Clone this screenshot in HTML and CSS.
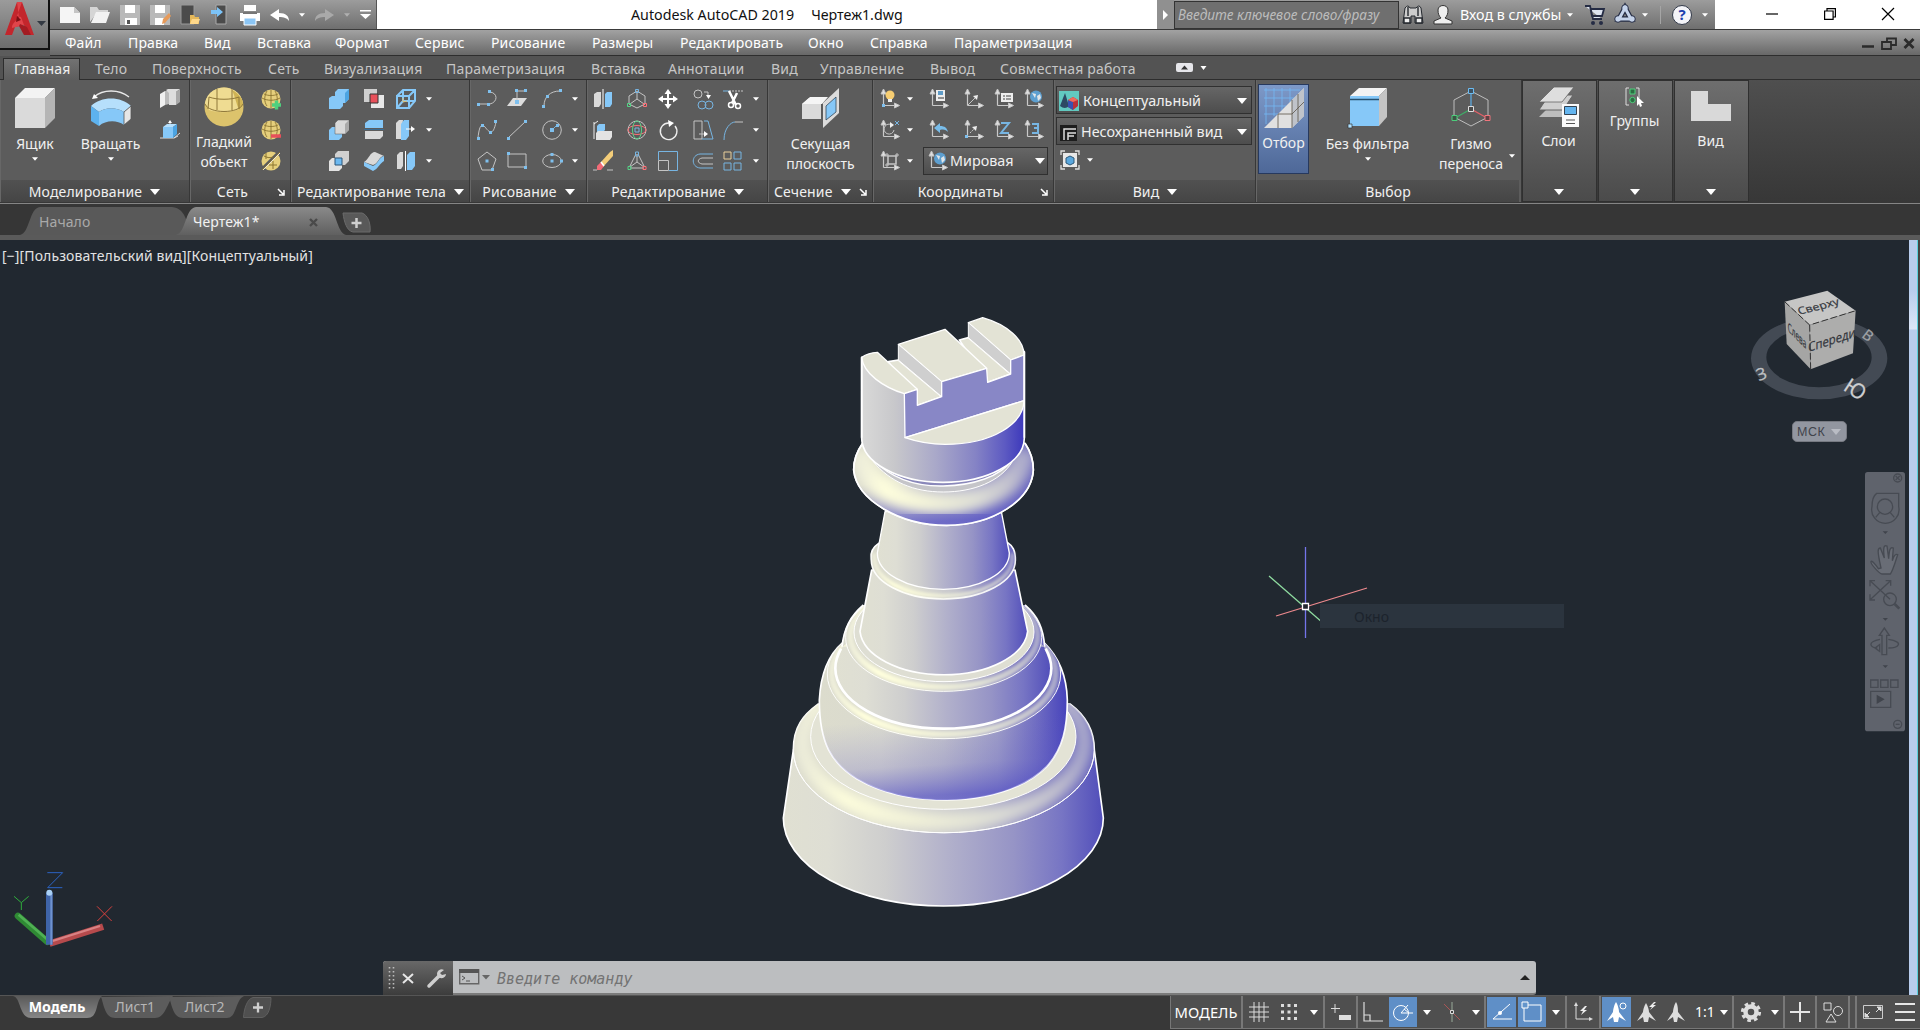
FILE: index.html
```html
<!DOCTYPE html>
<html lang="ru">
<head>
<meta charset="utf-8">
<title>Autodesk AutoCAD 2019 Чертеж1.dwg</title>
<link rel="stylesheet" href="styles.css">
</head>
<body>
<svg class="defs" width="0" height="0">
  <defs>
    <symbol id="caret" viewBox="0 0 10 6"><path d="M0 0h10L5 6z" fill="currentColor"/></symbol>
    <symbol id="axes" viewBox="0 0 20 20"><path d="M3.500 16.500V4M3.500 16.500H16" fill="none" stroke="#c9c9c9" stroke-width="1.200"/><path d="M1 5 3.500 0 6 5zM14.500 14l5 2.500-5 2.500z" fill="#e0e0e0"/></symbol>
    <symbol id="launch" viewBox="0 0 8 8"><path d="M1 1l5 5M7 2v5H2" fill="none" stroke="#fff" stroke-width="1.500"/></symbol>
    <symbol id="globe" viewBox="0 0 20 20"><circle cx="10" cy="10" r="9.500" fill="#e6cf7c"/><path d="M1 9c5 3 13 3 18 0M10 1v18M3 5c4 2 10 2 14 0M6 2C3 7 3 13 6 17M14 2c3 5 3 11 0 15" fill="none" stroke="#8a7431" stroke-width=".9"/></symbol>
  </defs>
</svg>

<header class="header">
  <button class="app">
    <svg width="49" height="49" viewBox="0 0 49 49"><path d="M17 2h5l12 33h-6l-4-10-9 2-3 8H5z" fill="#c3262c"/><path d="M17 2h5l-5 14 4 1 3 8-12 3c-1-3 4-8 7-10z" fill="#e0444a"/><path d="M17 16l4 4-5 2z" fill="#7b0f14"/><path d="M20 24l7 3 4 8h-7l-5-9z" fill="#a21c22"/><path d="M37 21h9l-4.500 5z" fill="#333942"/></svg>
  </button>
  <div class="title">
    <div class="qat">
      <svg class="i" viewBox="0 0 20 20"><path d="M0 2h14l6 6v10H0z" fill="#f5f5f5"/><path d="M14 2v6h6z" fill="#c5c5c5"/></svg>
      <svg class="i" viewBox="0 0 20 20"><path d="M0 17V2h7l2 3h9v4H6z" fill="#d5d5d5"/><path d="M1 18 6 7h14l-4 11z" fill="#f2f2f2"/></svg>
      <svg class="i" viewBox="0 0 20 20"><path d="M0 0h20v20H0z" fill="#b9b9b9"/><path d="M5 0h10v8H5zM5 13h12v7H5z" fill="#fff"/><path d="M7 15h3v4H7z" fill="#555"/></svg>
      <svg class="i" viewBox="0 0 20 20"><path d="M0 0h20v20H0z" fill="#b9b9b9"/><path d="M5 0h10v8H5zM5 13h9v7H5z" fill="#fff"/><path d="M12 19l1-5 6-6 2 3-6 7z" fill="#e69a5a"/></svg>
      <svg class="i" viewBox="0 0 20 20"><path d="M1 0h13v19H1z" fill="#4b4b4b" stroke="#999"/><path d="M10 19v-9h4l1 2h4v7z" fill="#e5b85a"/><path d="M10 19l2-5h8l-2 5z" fill="#ffd88a"/></svg>
      <svg class="i" viewBox="0 0 20 20"><path d="M6 0h10v19H6z" fill="#4b4b4b" stroke="#aaa"/><path d="M1 5h6V2l6 5-6 5V9H1z" fill="#7cc3f7"/></svg>
      <svg class="i" viewBox="0 0 20 20"><path d="M4 0h12v6H4zM0 8h20v8H0z" fill="#fff"/><path d="M3 7h14v2H3z" fill="#777"/><path d="M4 13h12v7H4z" fill="#8cc6f5" stroke="#fff"/></svg>
      <svg class="i" viewBox="0 0 20 20"><path d="M0 10 9 4v4c7 0 10 3 10 8-2-3-5-4-10-4v4z" fill="#fff"/></svg>
      <svg class="c sm"><use href="#caret"/></svg>
      <svg class="i" viewBox="0 0 20 20"><path d="M20 10 11 4v4C4 8 1 11 1 16c2-3 5-4 10-4v4z" fill="#a9a9a9"/></svg>
      <svg class="c sm dim"><use href="#caret"/></svg>
      <svg class="i" viewBox="0 0 20 20"><path d="M5 5h11v1.500H5zM5 9h11l-5.500 5z" fill="#fff"/></svg>
    </div>
    <div class="caption"><span>Autodesk AutoCAD 2019</span><span>Чертеж1.dwg</span></div>
    <div class="info">
      <div class="info-arrow"></div>
      <div class="search">Введите ключевое слово/фразу</div>
      <svg class="i" viewBox="0 0 20 20"><path d="M2 3q3-4 5 0h6q3-4 5 0l2 15h-8v-7H8v7H0z" fill="#ccc" stroke="#24282e"/><path d="M1 13h6v5H1zM13 13h6v5h-6zM5 2v9M15 2v9" fill="#eee" stroke="#24282e" stroke-width="1.400"/></svg>
      <svg class="i" viewBox="0 0 20 20"><path d="M5 5c0-6 10-6 10 0 0 4-1 6-3 8l7 3v3H1v-3l7-3C6 11 5 9 5 5z" fill="#eee" stroke="#333"/></svg>
      <span class="login">Вход в службы</span><svg class="c sm"><use href="#caret"/></svg>
      <svg class="i cart" viewBox="0 0 20 20"><path d="M0 1h5l3 13h9M5.500 4H19l-2 7H7z" fill="#dce3ef" stroke="#252c44" stroke-width="1.800"/><circle cx="8" cy="18" r="2" fill="#252c44"/><circle cx="16" cy="18" r="2" fill="#252c44"/></svg>
      <svg class="i tri" viewBox="0 0 20 20"><path d="M10 3 4 14h12z" fill="none" stroke="#252c44" stroke-width="5.500"/><g fill="#c5d3ea" stroke="#252c44"><circle cx="10" cy="3" r="3.300"/><circle cx="3" cy="14" r="3.300"/><circle cx="17" cy="14" r="3.300"/></g><path d="M10 3 4 14h12z" fill="none" stroke="#c5d3ea" stroke-width="3"/></svg>
      <svg class="c sm"><use href="#caret"/></svg>
      <i class="bar"></i>
      <span class="help">?</span>
      <svg class="c sm"><use href="#caret"/></svg>
    </div>
    <div class="win">
      <svg width="12" height="12" viewBox="0 0 12 12"><path d="M0 6h12" stroke="#000" stroke-width="1.200"/></svg>
      <svg width="12" height="12" viewBox="0 0 12 12" fill="none" stroke="#000" stroke-width="1.200"><path d="M.6 3h8.500v8.400H.6zM3 3V.6h8.400V9H9"/></svg>
      <svg width="12" height="12" viewBox="0 0 12 12"><path d="M0 0l12 12M12 0 0 12" stroke="#000" stroke-width="1.200"/></svg>
    </div>
  </div>
  <nav class="menu">
    <span>Файл</span><span>Правка</span><span>Вид</span><span>Вставка</span><span>Формат</span><span>Сервис</span><span>Рисование</span><span>Размеры</span><span>Редактировать</span><span>Окно</span><span>Справка</span><span>Параметризация</span>
    <svg class="mdi" width="54" height="14" viewBox="0 0 54 14"><path d="M0 9.500h12" stroke="#2b2b2b" stroke-width="2.500"/><path d="M20 5h9v7h-9zM25 5V1.500h9V8h-5" fill="none" stroke="#2b2b2b" stroke-width="1.800"/><path d="M42.500 2l9 9M51.500 2l-9 9" stroke="#2b2b2b" stroke-width="2.800"/></svg>
  </nav>
</header>

<nav class="tabs">
  <span class="on">Главная</span><span>Тело</span><span>Поверхность</span><span>Сеть</span><span>Визуализация</span><span>Параметризация</span><span>Вставка</span><span>Аннотации</span><span>Вид</span><span>Управление</span><span>Вывод</span><span>Совместная работа</span>
  <svg class="mini" width="32" height="10" viewBox="0 0 32 10"><rect width="17" height="9" rx="2" fill="#e6e6ea"/><path d="M5 6.500h7L8.500 2.500z" fill="#333"/><path d="M24.500 3h6l-3 4z" fill="#fff"/></svg>
</nav>

<section class="ribbon">
  <div class="panel p-model">
    <div class="body">
      <div class="big b1">
        <svg width="40" height="40" viewBox="0 0 40 40"><path d="M0 10h30v30H0z" fill="#dadada"/><path d="M0 10 10 0h30L30 10z" fill="#f3f3f3"/><path d="M30 10 40 0v30L30 40z" fill="#b5b5b5"/></svg>
        <b>Ящик</b><svg class="c sm"><use href="#caret"/></svg>
      </div>
      <div class="big b2">
        <svg width="40" height="40" viewBox="0 0 40 40"><path d="M3 9C12 1 28 1 38 9" fill="none" stroke="#e8e8e8" stroke-width="1.300"/><path d="M1 11l2-5 4 4z" fill="#fff"/><path d="M0 18c10-10 30-10 40 0l-7 6c-8-5-18-5-25 0z" fill="#b6dffb"/><path d="M0 18l8 6v14l-8-5z" fill="#5db2ee"/><path d="M8 24c7-5 17-5 25 0v13c-7-5-18-5-25 1z" fill="#86c8f8"/><path d="M33 24l7-6v13l-7 6z" fill="#e6e6e6" stroke="#555" stroke-width=".8"/></svg>
        <b>Вращать</b><svg class="c sm"><use href="#caret"/></svg>
      </div>
      <div class="col">
        <svg class="i" viewBox="0 0 20 20"><path d="M0 5 5 2v14l-5 3z" fill="#f0f0f0"/><path d="M5 2h4v13l-4 1z" fill="#bbb"/><path d="M6 1 8 0h12l-4 3v13H9V4z" fill="#ddd"/><path d="M16 3l4-3v13l-4 3z" fill="#a8a8a8"/></svg>
        <svg class="i" viewBox="0 0 20 20"><path d="M10 6V2M0 18h14l6-5M14 18l4-2" stroke="#ddd" fill="none"/><path d="M8 3l2-3 2 3z" fill="#fff"/><path d="M3 7h10v11H3z" fill="#86c8f8"/><path d="M3 7l4-3h10l-4 3z" fill="#b6dffb"/><path d="M13 7l4-3v10l-4 4z" fill="#4ca4e2"/></svg>
      </div>
    </div>
    <footer>Моделирование<svg class="c"><use href="#caret"/></svg></footer>
  </div>

  <div class="panel p-mesh">
    <div class="body">
      <div class="big">
        <svg width="40" height="40" viewBox="0 0 40 40"><circle cx="20" cy="20" r="19.500" fill="#dcc36c"/><path d="M1 16C3 4 14 .5 20 .5S37 4 39 16l-4 6c-8 4-22 4-30 1z" fill="#efdc92"/><path d="M28 3c8 4 11 10 11 14l-4 6c-3-7-4-14-7-20z" fill="#cfb354"/><path d="M1 17c4 10 34 10 38 0M5 10c8 3 22 3 30 0M13 2v21M28 2v21M5 10l-1 12M35 10v12" fill="none" stroke="#8f783a"/></svg>
        <b>Гладкий<br>объект</b>
      </div>
      <div class="col">
        <svg class="i" viewBox="0 0 20 20"><use href="#globe"/><path d="M11 16h9M15.500 11.500v9" stroke="#4fd07d" stroke-width="3.500"/></svg>
        <svg class="i" viewBox="0 0 20 20"><use href="#globe"/><path d="M10 16h10" stroke="#e8505a" stroke-width="3.500"/></svg>
        <svg class="i" viewBox="0 0 20 20"><circle cx="10" cy="10" r="9.500" fill="#e6cf7c"/><path d="M0 19 19 0" stroke="#5c5c5c" stroke-width="3"/><path d="M1 19 19 1M3 5c4 2 6 2 9 1M5 2v6M12 10v8M8 14h8" stroke="#8a7431" fill="none"/><path d="M2 19 19 2" stroke="#eee" stroke-width=".9"/></svg>
      </div>
    </div>
    <footer>Сеть<svg class="l"><use href="#launch"/></svg></footer>
  </div>

  <div class="panel p-solid">
    <div class="body icons">
      <svg class="i" viewBox="0 0 20 20"><path d="M0 9l3-2h3V3l3-3h11v10l-4 4h-2v3l-3 3H0z" fill="#86c8f8"/><path d="M16 4l4-4v10l-4 4z" fill="#4ca4e2"/></svg>
      <svg class="i" viewBox="0 0 20 20"><path d="M0 0h13v13H0z" fill="#cfcfcf"/><path d="M7 6h13v13H7z" fill="#e8e8e8"/><path d="M6 5h8v9H6z" fill="#e8505a" stroke="#333"/></svg>
      <svg class="i" viewBox="0 0 20 20"><path d="M1 7h12v12H1zM1 7l6-6h12v11l-6 7M13 7l6-6M7 1v11h12M7 12l-6 7" fill="none" stroke="#86c8f8" stroke-width="2"/><path d="M7 9v4l4-1" fill="none" stroke="#e0c070"/></svg>
      <svg class="c sm"><use href="#caret"/></svg>
      <svg class="i" viewBox="0 0 20 20"><path d="M0 10l3-3h10v10l-3 3H0z" fill="#86c8f8"/><path d="M6 3l3-3h11v10l-4 4H6z" fill="#d9d9d9" stroke="#555" stroke-width=".5"/><path d="M16 4l4-4v10l-4 4z" fill="#aaa"/></svg>
      <svg class="i" viewBox="0 0 20 20"><path d="M1 3l4-3h14v8H1z" fill="#86c8f8"/><path d="M1 11h18v5l-3 3H1z" fill="#d9d9d9"/><path d="M0 9.500h20" stroke="#3a6c94"/></svg>
      <svg class="i" viewBox="0 0 20 20"><path d="M0 3l3-3h4L5 19H0z" fill="#d9d9d9"/><path d="M5 4l3-4h5v16l-3 4H5z" fill="#86c8f8"/><path d="M10 9h6" stroke="#fff"/><path d="M15 6l4 3-4 3z" fill="#fff"/></svg>
      <svg class="c sm"><use href="#caret"/></svg>
      <svg class="i" viewBox="0 0 20 20"><path d="M0 10l3-3h10v10l-3 3H0z" fill="#e3e3e3"/><path d="M6 3l3-3h11v10l-4 4H6z" fill="#d0d0d0"/><path d="M6 7h7v7H6z" fill="#6db9f0" stroke="#2d567a"/></svg>
      <svg class="i" viewBox="0 0 20 20"><path d="M0 11C5 8 6 1 11 1l9 4c-5 0-6 8-11 9z" fill="#d9d9d9"/><path d="M0 11l9 4c5-2 6-9 11-10v5c-4 2-6 8-11 10l-9-5z" fill="#86c8f8"/></svg>
      <svg class="i" viewBox="0 0 20 20"><path d="M1 4l3-3h3v14l-2 3H1z" fill="#d9d9d9"/><path d="M11 4l3-3h5v14l-3 4h-5z" fill="#86c8f8"/><path d="M9.500 0v20" stroke="#fff"/></svg>
      <svg class="c sm"><use href="#caret"/></svg>
    </div>
    <footer>Редактирование тела<svg class="c"><use href="#caret"/></svg></footer>
  </div>

  <div class="panel p-draw">
    <div class="body icons line">
      <svg class="i" viewBox="0 0 20 20"><path d="M1 15h12c8-2 8-11 0-12"/><path class="d" d="M0 14h3v3H0zM10 14h3v3h-3zM11 1h3v3h-3z"/></svg>
      <svg class="i" viewBox="0 0 20 20"><path d="M6 9h14l-6 8H0z" fill="#ddd" stroke="none"/><path d="M10 12V2h9"/><path class="d" d="M8 0h3v3H8zM17 0h3v3h-3zM8 11h4v4H8z"/></svg>
      <svg class="i" viewBox="0 0 20 20"><path d="M2 17C2 8 8 2 18 2"/><path class="d" d="M0 16h3v3H0zM4 6h3v3H4zM17 0h3v3h-3z"/></svg>
      <svg class="c sm"><use href="#caret"/></svg>
      <svg class="i" viewBox="0 0 20 20"><path d="M1 18C2 8 4 2 8 7s8 10 11-5"/><path class="d" d="M0 17h3v3H0zM4 4h3v3H4zM12 11h3v3h-3zM17 0h3v3h-3z"/></svg>
      <svg class="i" viewBox="0 0 20 20"><path d="M1 18 19 1"/><path class="d" d="M0 17h3v3H0zM17 0h3v3h-3z"/></svg>
      <svg class="i" viewBox="0 0 20 20"><circle cx="10" cy="10" r="9.300"/><path class="b" d="M10 10l5-5"/><path class="d" d="M8 8h4v4H8zM14 4h3v3h-3z"/></svg>
      <svg class="c sm"><use href="#caret"/></svg>
      <svg class="i" viewBox="0 0 20 20"><path d="M10 1l9 7-4 11H5L1 8z"/><path class="d" d="M8.500 8.500h3v3h-3zM14 17h3v3h-3z"/></svg>
      <svg class="i" viewBox="0 0 20 20"><path d="M1 3h18v13H1z"/><path class="d" d="M0 1h3v3H0zM17 15h3v3h-3z"/></svg>
      <svg class="i" viewBox="0 0 20 20"><ellipse cx="10" cy="10" rx="9.300" ry="6.500"/><path class="d" d="M8.500 2h3v3h-3zM8.500 8.500h3v3h-3zM18 8.500h3v3h-3z"/></svg>
      <svg class="c sm"><use href="#caret"/></svg>
    </div>
    <footer>Рисование<svg class="c"><use href="#caret"/></svg></footer>
  </div>

  <div class="panel p-edit">
    <div class="body icons line">
      <svg class="i" viewBox="0 0 20 20"><path d="M1 5l3-2h4v12l-2 3H1z" fill="#d9d9d9" stroke="none"/><path d="M12 5l2-2h5v12l-2 3h-5z" fill="#86c8f8" stroke="none"/><path d="M10 0v20" stroke="#fff"/></svg>
      <svg class="i" viewBox="0 0 20 20"><path d="M10 2l8 5v8l-8 4-8-4V7zM10 10v-7M10 10l7 5M10 10l-7 5"/><path class="b" d="M8.500.5h3v3h-3z"/><path d="M.5 14.500h3v3h-3z" stroke="#54d486"/><path d="M16.500 14.500h3v3h-3z" stroke="#ff7077"/></svg>
      <svg class="i" viewBox="0 0 20 20"><path d="M10 3v14M3 10h14" stroke="#fff" stroke-width="2"/><path d="M10 0l3.500 5h-7zM10 20l3.500-5h-7zM0 10l5-3.500v7zM20 10l-5-3.500v7z" fill="#fff" stroke="none"/></svg>
      <svg class="i" viewBox="0 0 20 20"><circle cx="5" cy="5" r="4"/><path d="M11 3h4v4"/><path d="M13 6h5l-2.500 4z" fill="#fff" stroke="none"/><circle class="b" cx="9" cy="16" r="4"/><circle class="b" cx="16" cy="16" r="4"/></svg>
      <svg class="i" viewBox="0 0 20 20"><path class="b" d="M0 2h6" /><path d="M6 2h14" stroke-dasharray="2 1"/><path d="M6 2l7 14M14 4 9 14" stroke="#fff" stroke-width="2.500"/><circle cx="8" cy="16" r="2.500" stroke="#fff" stroke-width="1.500"/><circle cx="15" cy="17" r="2.500" stroke="#fff" stroke-width="1.500"/></svg>
      <svg class="c sm"><use href="#caret"/></svg>
      <svg class="i" viewBox="0 0 20 20"><path d="M1 2v17M1 4l4-3" stroke="#eee"/><path d="M4 6l2-2h6v6l-2 2H4z" fill="#86c8f8" stroke="none"/><path d="M3 13l2-2h14v6l-2 3H3z" fill="#e3e3e3" stroke="none"/></svg>
      <svg class="i" viewBox="0 0 20 20"><circle cx="10" cy="10" r="9"/><ellipse cx="10" cy="10" rx="9" ry="4.500" stroke="#ff7077"/><ellipse cx="10" cy="10" rx="4.500" ry="9" stroke="#54d486"/><path class="b" d="M8 8h4v4H8z"/></svg>
      <svg class="i" viewBox="0 0 20 20"><path d="M11 3a8.300 8.300 0 1 0 6 3" stroke="#eee" stroke-width="1.400"/><path d="M10 0l6 3-5 4z" fill="#fff" stroke="none"/></svg>
      <svg class="i" viewBox="0 0 20 20"><path d="M1 1h8v18H1zM6 14h7"/><path d="M11 11l4 3-4 3z" fill="#fff" stroke="none"/><path class="b" d="M11 1h4l5 18H9"/></svg>
      <svg class="i" viewBox="0 0 20 20"><path class="b" d="M1 20C1 8 8 2 12 2"/><path d="M12 2h8"/></svg>
      <svg class="c sm"><use href="#caret"/></svg>
      <svg class="i" viewBox="0 0 20 20"><path d="M0 19h4M14 19h6"/><path d="M8 11 17 1l3-2v6L10 16z" fill="#f3cd79" stroke="none"/><path d="M8 11l3 4-3 4H4v-4z" fill="#f26b77" stroke="none"/><path d="M8 11l3 4" stroke="#fff" stroke-width="1.500"/></svg>
      <svg class="i" viewBox="0 0 20 20"><path d="M9 3 3 15M11 3l6 12M3 17h14M10 3v8l-7 5M10 11l7 5"/><path class="b" d="M8.500 1h3v4h-3z"/><path d="M1 15.500h3v3H1z" stroke="#54d486"/><path d="M16 15.500h3v3h-3z" stroke="#ff7077"/></svg>
      <svg class="i" viewBox="0 0 20 20"><path class="b" d="M.5 9V.5h19v19H11"/><path d="M.5 9.500h10v10H.5z"/></svg>
      <svg class="i" viewBox="0 0 20 20"><path class="b" d="M20 3H7C-2 4-2 16 7 17h13"/><path d="M20 7H9C4 8 4 12 9 13h11"/></svg>
      <svg class="i" viewBox="0 0 20 20"><path d="M1 1h7v7H1z" stroke="#e9cf9a"/><path class="b" d="M11 1h7v7h-7zM1 12h7v7H1zM11 12h7v7h-7z"/></svg>
      <svg class="c sm"><use href="#caret"/></svg>
    </div>
    <footer>Редактирование<svg class="c"><use href="#caret"/></svg></footer>
  </div>

  <div class="panel p-section">
    <div class="body">
      <div class="big">
        <svg width="40" height="40" viewBox="0 0 40 40"><path d="M1 16l7-6h16l-4 6v15H1z" fill="#dadada"/><path d="M1 16l8-7h18l-6 7z" fill="#f5f5f5"/><path d="M22 15 38 0v25L22 40z" fill="#dcdcdc"/><path d="M25 18 35 9v15l-10 8z" fill="#86c8f8" stroke="#34495c" stroke-width=".8"/></svg>
        <b>Секущая<br>плоскость</b>
      </div>
    </div>
    <footer>Сечение<svg class="c"><use href="#caret"/></svg><svg class="l"><use href="#launch"/></svg></footer>
  </div>

  <div class="panel p-ucs">
    <div class="body icons line">
      <svg class="i" viewBox="0 0 20 20"><use href="#axes"/><circle cx="10" cy="6" r="4.500" fill="#f6cd72" stroke="none"/><path d="M8 10h4v3H8z" fill="#eee" stroke="none"/><path class="d" d="M2 15h3v3H2z"/></svg>
      <svg class="c sm"><use href="#caret"/></svg>
      <svg class="i" viewBox="0 0 20 20"><use href="#axes"/><path d="M7 1h9v11H7z" fill="#eee" stroke="none"/><path d="M9 2h5v4H9z" fill="#5f9cc8" stroke="none"/><path d="M9 9h6" stroke="#333"/></svg>
      <svg class="i" viewBox="0 0 20 20"><use href="#axes"/><path d="M4 16 12 8"/><path d="M14 6l-1 5-4-4z" fill="#eee" stroke="none"/></svg>
      <svg class="i" viewBox="0 0 20 20"><use href="#axes"/><path d="M7 4h12v9H7z" fill="#eee" stroke="none"/><path d="M9 7h2M12 7h5M9 10h2M12 10h5" stroke="#444"/></svg>
      <svg class="i" viewBox="0 0 20 20"><use href="#axes"/><circle cx="12" cy="7.500" r="6" fill="#5d9fd0" stroke="none"/><path d="M8 4l4 1-1 4zM13 7l3-2 1 4-3 3z" fill="#e2e6e9" stroke="none"/></svg>
      <svg class="i" viewBox="0 0 20 20"><use href="#axes"/><path d="M13 6a5 5 0 1 0 1 4"/><path d="M10 2l4 3-4 3z" fill="#eee" stroke="none"/><path class="b" d="M15 1l4 4M19 1l-4 4"/></svg>
      <svg class="c sm"><use href="#caret"/></svg>
      <svg class="i" viewBox="0 0 20 20"><use href="#axes"/><path d="M5 8l6-5v3c5 0 7 2 8 6-2-2-4-3-8-2v3z" fill="#79bdea" stroke="none"/></svg>
      <svg class="i" viewBox="0 0 20 20"><use href="#axes"/><path d="M6 13l5-5" stroke-dasharray="2 1"/><path d="M13 6l-1 5-4-4z" fill="#eee" stroke="none"/><path class="d" d="M1 15h3v3H1z"/></svg>
      <svg class="i" viewBox="0 0 20 20"><use href="#axes"/><path class="b" d="M7 3h8L7 13h8" stroke-width="2"/></svg>
      <svg class="i" viewBox="0 0 20 20"><use href="#axes"/><path class="b" d="M8 4h6v4h-4h4v5H8" stroke-width="2"/></svg>
      <svg class="i" viewBox="0 0 20 20"><use href="#axes"/><path d="M8 5h8v8H8z" stroke-width="1.600"/><path d="M6 3h2v2H6zM16 3h2v2h-2zM6 13h2v2H6z"/></svg>
      <svg class="c sm"><use href="#caret"/></svg>
      <div class="combo wcs"><svg class="i" viewBox="0 0 20 20"><use href="#axes"/><circle cx="12" cy="7.500" r="6" fill="#5d9fd0" stroke="none"/><path d="M8 4l4 1-1 4zM13 7l3-2 1 4-3 3z" fill="#e2e6e9" stroke="none"/></svg><span>Мировая</span><svg class="c"><use href="#caret"/></svg></div>
    </div>
    <footer>Координаты<svg class="l"><use href="#launch"/></svg></footer>
  </div>

  <div class="panel p-view">
    <div class="body">
      <div class="combo"><svg class="i" viewBox="0 0 20 20"><path d="M0 0h20v20H0z" fill="#62c9c0"/><path d="M6 2 1 15q5 4 9 0z" fill="#2d4a63"/><path d="M9 9l5-3 5 3v6l-5 4-5-3z" fill="#b9303a"/><path d="M9 9l5 2v8l-5-3z" fill="#3a50b0"/><path d="M9 9l5-3 5 3-5 2z" fill="#ee6a5c"/></svg><span>Концептуальный</span><svg class="c"><use href="#caret"/></svg></div>
      <div class="combo"><svg class="i" viewBox="0 0 20 20"><path d="M1 3h17v16H1z" fill="#1d1d1d"/><path d="M5 18V7h12M9 18v-7h8M9 14h6" fill="none" stroke="#ddd" stroke-width="1.500"/></svg><span>Несохраненный вид</span><svg class="c"><use href="#caret"/></svg></div>
      <div class="vp"><svg class="i" viewBox="0 0 20 20"><path d="M3 3h14v14H3z" fill="#e8e8e8"/><path d="M6 8l4-2 4 2v5l-4 2-4-2z" fill="#5aa7dd" stroke="#2c5879"/><path d="M1 5V1h4M15 1h4v4M19 15v4h-4M5 19H1v-4" fill="none" stroke="#ddd" stroke-width="1.300"/></svg><svg class="c sm"><use href="#caret"/></svg></div>
    </div>
    <footer>Вид<svg class="c"><use href="#caret"/></svg></footer>
  </div>

  <div class="panel p-select">
    <div class="body">
      <div class="big pick">
        <svg width="40" height="40" viewBox="0 0 40 40"><path d="M0 2h36M0 10h30M0 18h22M0 26h14M2 0v36M10 0v28M18 0v22M26 0v14" stroke="#74b9f5" stroke-width=".8"/><path d="M0 40 40 0v28L28 40z" fill="#e0e0e0"/><path d="M28 12 40 0v28L28 40z" fill="#bfc3ca"/><path d="M14 26v14M14 26h14L40 14M28 12v28M34 6v28" stroke="#5b5348" fill="none" stroke-width=".8"/></svg>
        <b>Отбор</b>
      </div>
      <div class="big filter">
        <svg width="40" height="40" viewBox="0 0 40 40"><path d="M2 8h29v30H2z" fill="#86c8f8"/><path d="M2 8 11 0h28l-8 8z" fill="#f3f3f3"/><path d="M31 8l8-8v29l-8 9z" fill="#c4c4c4"/><path d="M2 11.500h29" stroke="#25506f" stroke-width="1.500"/><path d="M0 36h4v4H0z" fill="#aee0ff" stroke="#333" stroke-width=".7"/></svg>
        <b>Без фильтра</b><svg class="c sm"><use href="#caret"/></svg>
      </div>
      <div class="big gizmo">
        <svg width="40" height="40" viewBox="0 0 40 40" fill="none"><path d="M20 3l17 9v17l-17 9-17-9V12z" stroke="#bdbdbd"/><path d="M20 3v18" stroke="#5ca7dc" stroke-width="1.300"/><path d="M20 21 4 30" stroke="#3fae68" stroke-width="1.300"/><path d="M20 21l16 9" stroke="#e26068" stroke-width="1.300"/><path d="M17.500.5h5v5h-5z" stroke="#6cbcf2" fill="#3e5261"/><path d="M1 27.500h5v5H1z" stroke="#4ccc7b" fill="#3c5444"/><path d="M34 27.500h5v5h-5z" stroke="#f0757c" fill="#5d4345"/><path d="M17.500 18.500h5v5h-5z" stroke="#ddd" fill="#4a4a4a"/></svg>
        <b>Гизмо<br>переноса</b>
      </div>
      <svg class="c sm gizmo-caret"><use href="#caret"/></svg>
    </div>
    <footer>Выбор</footer>
  </div>

  <div class="slim">
    <svg width="40" height="40" viewBox="0 0 40 40"><path d="M10 20h24L24 30H0z" fill="#bdbdbd"/><path d="M10 8h24L24 23H0z" fill="#cfcfcf" stroke="#646464"/><path d="M15 0h20L23 15H0z" fill="#dedede" stroke="#646464" stroke-width=".8"/><path d="M23 17h17v23H23z" fill="#fafafa"/><path d="M25.500 19.500h12v8h-12z" fill="#64b5ef" stroke="#345"/><path d="M27 33h9M27 36.500h9" stroke="#555"/></svg>
    <b>Слои</b><svg class="c"><use href="#caret"/></svg>
  </div>
  <div class="slim groups">
    <svg width="20" height="20" viewBox="0 0 20 20"><path d="M4 1H1v17h3M11 1h3v10" fill="none" stroke="#ddd"/><path d="M5 2h5v5H5z" fill="#2b6e43" stroke="#4fd07d"/><circle cx="7.500" cy="13" r="2.700" fill="#2b6e43" stroke="#4fd07d"/><path d="M12 9l7 7h-3l1 3-2 1-1-3-2 2z" fill="#fff"/></svg>
    <b>Группы</b><svg class="c"><use href="#caret"/></svg>
  </div>
  <div class="slim">
    <svg width="40" height="40" viewBox="0 0 40 40"><path d="M0 4h17v13h23v17H0z" fill="#d9d9d9"/></svg>
    <b>Вид</b><svg class="c"><use href="#caret"/></svg>
  </div>
</section>

<nav class="files">
  <div class="ft start"><svg width="166" height="28" viewBox="0 0 166 28"><path d="M0 28C10 26 9 1 20 0h132c8 1 11 5 14 12v16z" fill="#595959"/></svg><span>Начало</span></div>
  <div class="ft cur"><svg width="170" height="28" viewBox="0 0 170 28"><defs><linearGradient id="ftg" x2="0" y2="1"><stop stop-color="#8a8a8a"/><stop offset="1" stop-color="#606060"/></linearGradient></defs><path d="M0 28C10 26 9 1 20 0h130c11 1 10 25 20 28z" fill="url(#ftg)"/></svg><span>Чертеж1*</span><svg class="x" width="9" height="9" viewBox="0 0 9 9"><path d="M1 1l7 7M8 1 1 8" stroke="#4a4a4a" stroke-width="2.400"/></svg></div>
  <svg class="ft-add" width="29" height="20" viewBox="0 0 29 20"><path d="M0 0h19c6 2 9 11 8 19H10C4 18 1 9 0 0z" fill="#595959" stroke="#6b6b6b"/><path d="M8.500 10h10M13.500 5v10" stroke="#cfcfcf" stroke-width="2.500"/></svg>
</nav>
<div class="strip"></div>

<main class="view">
  <div class="vlabel">[−][Пользовательский вид][Концептуальный]</div>

  <svg class="rook" width="370" height="620" viewBox="0 0 1110 1860">
    <defs>
      <linearGradient id="cone"><stop stop-color="#e0e0d2"/><stop offset=".14" stop-color="#deded4"/><stop offset=".32" stop-color="#cecece"/><stop offset=".52" stop-color="#b1b0cb"/><stop offset=".72" stop-color="#9694c6"/><stop offset=".87" stop-color="#7775c4"/><stop offset="1" stop-color="#514eba"/></linearGradient>
      <linearGradient id="cyl"><stop stop-color="#d9d9d8"/><stop offset=".2" stop-color="#c8c8cb"/><stop offset=".45" stop-color="#aaa9c9"/><stop offset=".7" stop-color="#8583c5"/><stop offset=".88" stop-color="#5d5ac2"/><stop offset="1" stop-color="#3c38bb"/></linearGradient>
      <linearGradient id="rim"><stop stop-color="#d8d8cb"/><stop offset=".25" stop-color="#e2e2d2"/><stop offset=".6" stop-color="#c3c3cc"/><stop offset=".85" stop-color="#8481c2"/><stop offset="1" stop-color="#6663bd"/></linearGradient>
      <linearGradient id="hi"><stop stop-color="#ededda"/><stop offset=".15" stop-color="#ffffdd"/><stop offset=".4" stop-color="#f3f3d9"/><stop offset=".7" stop-color="#dedfd6"/><stop offset=".9" stop-color="#c4c3ce"/><stop offset="1" stop-color="#a9a8cb"/></linearGradient>
      <linearGradient id="bulb"><stop stop-color="#dcdccd"/><stop offset=".25" stop-color="#dadacf"/><stop offset=".5" stop-color="#c4c4cb"/><stop offset=".72" stop-color="#a09fc7"/><stop offset=".88" stop-color="#6f6cc2"/><stop offset="1" stop-color="#4642bb"/></linearGradient>
      <linearGradient id="under" x2=".15" y2="1"><stop offset=".25" stop-color="#5f5bc6" stop-opacity="0"/><stop offset=".7" stop-color="#5a56c6" stop-opacity=".22"/><stop offset="1" stop-color="#4541c4" stop-opacity=".62"/></linearGradient>
      <linearGradient id="under2" x2=".15" y2="1"><stop offset=".5" stop-color="#6562c4" stop-opacity="0"/><stop offset="1" stop-color="#4f4bc4" stop-opacity=".75"/></linearGradient>
      <filter id="soft" x="-20%" y="-20%" width="140%" height="140%"><feGaussianBlur stdDeviation="16"/></filter>
      <filter id="soft2" x="-20%" y="-20%" width="140%" height="140%"><feGaussianBlur stdDeviation="5"/></filter>
      <clipPath id="c1"><path d="M100 1350C100 1280 130 1245 175 1212H930C975 1245 1003 1290 1003 1350A451 248 0 0 1 100 1350z"/></clipPath>
      <clipPath id="c2"><path d="M178 1200C182 1120 205 1065 248 1028H852C890 1065 920 1120 922 1200V1500H178z"/></clipPath>
      <clipPath id="c3"><path d="M310 915C270 950 248 985 248 1040V1200H854V1040C850 985 835 950 795 915z"/></clipPath>
      <clipPath id="c5"><path d="M308 430C285 462 281 490 281 510 290 600 420 676 560 676S815 600 820 510C820 480 812 455 795 430z"/></clipPath>
    </defs>
    <g stroke="#fff" stroke-width="5" stroke-linejoin="round">
      <path d="M100 1350 70 1554A480 264 0 0 0 1030 1554L1003 1350z" fill="url(#cone)"/>
      <path d="M100 1350C100 1280 130 1245 175 1212H930C975 1245 1003 1290 1003 1350" fill="url(#rim)"/>
      <path d="M100 1350A451 248 0 0 0 1003 1350" fill="url(#rim)" stroke-width="3"/>
      <g clip-path="url(#c1)"><ellipse cx="550" cy="1325" rx="424" ry="240" fill="none" stroke="url(#hi)" stroke-width="46" filter="url(#soft)"/></g>
      <path d="M100 1350A451 248 0 0 0 1003 1350" fill="none" stroke-width="3"/>
      <ellipse cx="550" cy="1310" rx="398" ry="218" fill="#e3e3d5" stroke-width="3"/>
      <path d="M178 1200C178 1330 215 1390 290 1436 380 1488 480 1500 560 1500 680 1500 795 1465 860 1400 910 1345 922 1280 922 1200 920 1120 890 1065 852 1028H248C205 1065 182 1120 178 1200z" fill="url(#bulb)"/>
      <path d="M178 1200C178 1330 215 1390 290 1436 380 1488 480 1500 560 1500 680 1500 795 1465 860 1400 910 1345 922 1280 922 1200z" fill="url(#under)" stroke="none"/>
      <g clip-path="url(#c2)">
        <ellipse cx="552" cy="1122" rx="350" ry="194" fill="url(#rim)" stroke-width="3"/>
        <ellipse cx="551" cy="1120" rx="336" ry="183" fill="none" stroke="url(#hi)" stroke-width="18" filter="url(#soft2)"/>
      </g>
      <path d="M248 1040 226 1105A324 181 0 0 0 874 1105L852 1040z" fill="url(#cone)" stroke="none"/>
      <path d="M243 1046C232 1066 226 1085 226 1105A324 181 0 0 0 874 1105C874 1085 868 1066 857 1046" fill="none" stroke-width="8"/>
      <path d="M310 915C270 950 248 985 248 1040L260 1030C290 1125 420 1174 550 1174S815 1120 842 1030L852 1040C852 985 835 950 795 915z" fill="url(#rim)" stroke="none"/>
      <g clip-path="url(#c3)">
        <ellipse cx="551" cy="1013" rx="294" ry="161" fill="url(#rim)" stroke-width="3"/>
        <ellipse cx="552" cy="1008" rx="281" ry="153" fill="none" stroke="url(#hi)" stroke-width="18" filter="url(#soft2)"/>
        <ellipse cx="552" cy="996" rx="270" ry="149" fill="#deded3" stroke-width="3"/>
      </g>
      <path d="M310 915C270 950 252 985 246 1040M795 915C835 950 850 985 854 1040" fill="none"/>
      <path d="M335 810 300 994A252 139 0 0 0 803 994L765 810z" fill="url(#cone)"/>
      <path d="M356 730C325 750 334 775 334 780A216 117 0 0 0 766 780C766 750 758 738 743 728z" fill="url(#rim)"/>
      <path d="M343 760V775A207 113 0 0 0 757 775V760" fill="none" stroke="url(#hi)" stroke-width="12" filter="url(#soft2)"/>
      <path d="M375 635 352 759A198 109 0 0 0 748 759L724 635z" fill="url(#cone)" stroke-width="4"/>
      <path d="M308 430C285 462 281 490 281 510 290 600 420 676 560 676S815 600 820 510C820 480 812 455 795 430z" fill="url(#rim)"/>
      <g clip-path="url(#c5)"><path d="M281 510C290 600 420 676 560 676S815 600 820 510V430H281z" fill="url(#under2)" stroke="none"/><path d="M300 440C300 655 790 655 795 440" transform="translate(0 8)" fill="none" stroke="url(#hi)" stroke-width="64" filter="url(#soft)"/></g>
      <path d="M308 430C285 462 281 490 281 510 290 600 420 676 560 676S815 600 820 510C820 480 812 455 795 430" fill="none"/>
      <path d="M340 485C390 545 460 576 550 576S720 545 757 485" fill="#c5c5c9" stroke-width="3"/>
      <path d="M340 480C390 530 460 560 550 558S720 530 757 480" fill="#8a88ba" stroke-width="4"/>
      <path d="M305 172V413A244 134 0 0 0 793 413V155L433 270z" fill="url(#cyl)"/>
      <path d="M385 185 415 180 545 290 473 316zM598 120 625 113 752 222 683 247z" fill="#e3e3d5"/>
      <path d="M305 172Q325 158 352 157L472 268 433 281C370 262 310 220 305 172zM415 133 555 88 680 205 545 245zM625 68 668 53C745 75 792 120 792 165L752 180z" fill="#e3e3d5" stroke-width="4"/>
      <path d="M415 133 545 245V290L415 180zM625 68 752 180V222L625 113z" fill="#cfcfcf" stroke-width="3"/>
      <path d="M433 281 472 268V316L545 290V245L680 205 683 247 752 222V180L792 165V302L435 413z" fill="#8887c6" stroke-width="4"/>
      <path d="M435 413 792 302C790 370 700 433 555 433 510 433 470 425 435 413z" fill="#e3e3d5" stroke-width="4"/>
      <path d="M305 172V413M793 155V413" fill="none"/>
    </g>
  </svg>

  <svg class="cross" width="110" height="96" viewBox="0 0 110 96" fill="none"><path d="M39.500 2v91" stroke="#7474ea" stroke-width="1.300"/><path d="M3 31 57 78" stroke="#8fdca0" stroke-width="1.200"/><path d="M10 71 101 43" stroke="#ee8a8e" stroke-width="1.200"/><path d="M36.500 58.500h6v6h-6z" fill="#22282f" stroke="#fff" stroke-width="1.300"/></svg>
  <div class="ghost">Окно</div>

  <svg class="cube" width="190" height="150" viewBox="0 0 570 450">
    <path d="M96 265a204.500 123 0 1 0 409 0a204.500 123 0 1 0-409 0zM142 262a158 90 0 1 0 316 0a158 90 0 1 0-316 0z" fill="#434a54" fill-rule="evenodd"/>
    <path d="M197 95 325 62 410 122 272 165z" fill="#c6c6c5"/><path d="M197 95 272 165 275 298 203 222z" fill="#a5a5a4"/><path d="M272 165 410 122 402 250 275 298z" fill="#adadac"/>
    <path d="M197 95 272 165 410 122M272 165l3 133" fill="none" stroke="#333" stroke-width="3" stroke-dasharray="20 8"/>
    <g font-family="Open Sans, sans-serif" text-anchor="middle" fill="#33363c" stroke="#33363c" stroke-width=".8">
      <text transform="matrix(.95 -.24 .3 .75 302 119)" font-size="38">Сверху</text>
      <text transform="matrix(.5 .5 0 1 234 210)" font-size="38">Слева</text>
      <text transform="matrix(.87 -.28 0 1 339 223)" font-size="39">Спереди</text>
      <text transform="translate(126 310) rotate(-22)" font-size="50" fill="#bfc1c4" stroke="#bfc1c4" dominant-baseline="central">З</text>
      <text transform="translate(410 356) rotate(33)" font-size="62" fill="#cfd0d2" stroke="#cfd0d2" dominant-baseline="central">Ю</text>
      <text transform="translate(448 194) rotate(38)" font-size="44" fill="#a2a5a9" stroke="#a2a5a9" dominant-baseline="central">В</text>
    </g>
  </svg>
  <div class="wcs-btn">МСК<svg width="10" height="6"><use href="#caret"/></svg></div>
  <svg class="navbar" width="40" height="260" viewBox="0 0 120 780"><rect width="120" height="778" rx="8" fill="#5f636c"/><g fill="none" stroke="#474b53" stroke-width="4"><circle cx="98" cy="18" r="12"/><path d="M92 12l12 12M104 12 92 24"/><path d="M35 64h66v40a41 41 0 1 1-80 0q0-30 14-40z"/><circle cx="60" cy="104" r="23"/><path d="M44 122l-12 14M76 122l12 14"/><path d="M40 290c-10-15-20-25-22-22-3 6 25 38 33 38h25c8-10 16-40 22-58-8-4-12 6-16 18l3-38c-10-4-12 6-14 32l-5-38c-10-4-12 6-8 36l-12-30c-8 0-10 6 2 60z" fill="#696d76"/><path d="M17 328l58 54M17 382l58-54M15 343v-17h15M62 326h15v15M15 367v17h15"/><circle cx="75" cy="382" r="19"/><path d="M89 396l14 14" stroke-width="8"/><path d="M51 548V490h-8l15-22 15 22h-8v58z"/><path d="M45 502c-40 8-30 24-8 26M70 502c50 8 30 26 0 26M30 528l14-10v20z"/><path d="M17 624h22v22H17zM47 624h22v22H47zM77 624h22v22H77zM17 658h60v48H17z"/><circle cx="98" cy="757" r="12"/><path d="M92 757h12"/></g><g fill="#40444c"><path d="M53 178h16l-8 8zM53 438h16l-8 8zM53 580h16l-8 8zM35 668l24 14-24 14z"/></g></svg>

  <svg class="ucs" width="120" height="90" viewBox="0 0 360 270" fill="none"><path d="M54 168 142 245" stroke="#2f8a34" stroke-width="20" stroke-linecap="round"/><path d="M56 164 144 240" stroke="#50b154" stroke-width="8"/><path d="M158 248 300 203" stroke="#b64a4c" stroke-width="20" stroke-linecap="square"/><path d="M158 243 300 198" stroke="#d98284" stroke-width="7"/><path d="M148 98V254" stroke="#3f64a8" stroke-width="20"/><path d="M154 98V254" stroke="#6f93cf" stroke-width="6"/><circle cx="148" cy="98" r="9" fill="#a9d0f5"/><path d="M142 38h46L143 83h44" stroke="#2b63c4" stroke-width="3"/><path d="M42 109 64 128 86 109M64 128v22" stroke="#2fae3c" stroke-width="3"/><path d="M291 139l44 44M336 139l-44 44" stroke="#d8413e" stroke-width="3"/></svg>

  <div class="cmd">
    <div class="cmd-l"><svg width="70" height="34" viewBox="0 0 70 34"><path d="M6.500 6v22M10.500 6v22" stroke="#bdbdbd" stroke-width="1.600" stroke-dasharray="1.600 2.400"/><path d="M20 13l10 9M30 13l-10 9" stroke="#e6e6e6" stroke-width="2"/><path d="M46 25 56 15" stroke="#cfcfcf" stroke-width="3.500" stroke-linecap="round"/><path d="M61 9a4.500 4.500 0 1 0 2 4l-4 1-2-2z" fill="#cfcfcf"/></svg></div>
    <svg width="32" height="16" viewBox="0 0 32 16"><path d="M.7.7h19v14H.7z" fill="none" stroke="#666" stroke-width="1.400"/><path d="M0 0h20v4H0z" fill="#555"/><path d="M3 7l3 2-3 2M7 12h4" fill="none" stroke="#555"/><path d="M23 6h8l-4 4.500z" fill="#666"/></svg>
    <span>Введите команду</span>
    <i></i>
  </div>
  <div class="edge"></div>
</main>

<footer class="bottom">
  <div class="lt on"><svg width="90" height="23" viewBox="0 0 90 23"><defs><linearGradient id="ltg" x2="0" y2="1"><stop stop-color="#5a5a5a"/><stop offset="1" stop-color="#868686"/></linearGradient></defs><path d="M0 0c8 1 6 22 18 22h56c12 0 8-16 15-22z" fill="url(#ltg)"/></svg><span>Модель</span></div>
  <div class="lt a"><svg width="72" height="23" viewBox="0 0 72 23"><path d="M0 1c3 8 4 21 14 21h40c10 0 12-14 18-22z" fill="#5c5c5c"/></svg><span>Лист1</span></div>
  <div class="lt b"><svg width="76" height="23" viewBox="0 0 76 23"><path d="M0 1c3 8 4 21 14 21h44c10 0 8-18 17-22z" fill="#5c5c5c"/></svg><span>Лист2</span></div>
  <svg class="lt-add" width="29" height="21" viewBox="0 0 29 21"><path d="M10 .5h18c0 8-2 19-9 20H.5C1 12 4 2 10 .500z" fill="#4f4f4f" stroke="#5f5f5f"/><path d="M10 10.500h10M15 5.500v10" stroke="#cfcfcf" stroke-width="2.300"/></svg>
  <div class="status">
    <span class="e model">МОДЕЛЬ</span>
    <span><svg class="i" viewBox="0 0 20 20"><path d="M5 0v20M10 0v20M15 0v20M0 5h20M0 10h20M0 15h20" stroke="#ddd"/></svg></span>
    <span><svg class="i" viewBox="0 0 20 20"><path d="M3.500 2v18M10 2v18M16.500 2v18" stroke="#ddd" stroke-width="3" stroke-dasharray="3 3.500"/></svg></span>
    <span class="e"><svg class="c"><use href="#caret"/></svg></span>
    <span class="e"><svg class="i" viewBox="0 0 20 20"><path d="M4 2v9M0 6.500h9" stroke="#ddd"/><path d="M8 13h12v5H8z" fill="#ddd"/></svg></span>
    <span><svg class="i" viewBox="0 0 20 20"><path d="M1 0v19h19M1 13h6v6" fill="none" stroke="#ddd" stroke-width="1.200"/></svg></span>
    <span class="act"><svg class="i" viewBox="0 0 20 20"><circle cx="8" cy="11" r="7.500" fill="none" stroke="#fff"/><path d="M20 11H8l7-8M11 7l5 4" fill="none" stroke="#fff"/></svg></span>
    <span><svg class="c"><use href="#caret"/></svg></span>
    <span><svg class="i" viewBox="0 0 20 20"><path d="M2 2l16 16" stroke="#a55"/><path d="M10 0v20" stroke="#9a9"/><path d="M8.500 8.500h3v3h-3z" fill="#444" stroke="#ddd"/></svg></span>
    <span class="e"><svg class="c"><use href="#caret"/></svg></span>
    <span class="act"><svg class="i" viewBox="0 0 20 20"><path d="M18 2 1 17h19" fill="none" stroke="#fff"/><circle cx="8" cy="11" r="2" fill="#fff"/></svg></span>
    <span class="act"><svg class="i" viewBox="0 0 20 20"><path d="M6 3h13v16H2V6" fill="none" stroke="#fff"/><path d="M0 0h6v6H0z" fill="#6495cb" stroke="#fff"/></svg></span>
    <span class="e"><svg class="c"><use href="#caret"/></svg></span>
    <span class="e"><svg class="i" viewBox="0 0 20 20"><path d="M3 4v13h13" fill="none" stroke="#ddd"/><path d="M1 4l2-4 2 4zM16 15l4 2-4 2z" fill="#ddd"/><path d="M12 4l-5 5h3l-2 4 6-5h-3l3-4z" fill="#eee"/></svg></span>
    <span class="act"><svg class="i" viewBox="0 0 20 20"><path d="M9 0c2 3 3 8 3 10l7 9-7-4-1 5H7l-1-5-6 4 6-9c0-2 1-7 3-10z" fill="#fff"/><circle cx="16" cy="4" r="3" fill="none" stroke="#fff"/></svg></span>
    <span><svg class="i" viewBox="0 0 20 20"><path d="M9 1c2 3 3 7 3 9l7 9-7-4-1 5H7l-1-5-6 4 6-9c0-2 1-6 3-9z" fill="#ddd"/><path d="M17 0l-5 5h3l-2 3 6-5h-3l3-3z" fill="#eee"/></svg></span>
    <span><svg class="i" viewBox="0 0 20 20"><path d="M10 0c2 3 2 8 2 10l7 9-7-4-1 5H8l-1-5-6 4 6-9c0-2 1-7 3-10z" fill="#ddd"/></svg></span>
    <span class="e scale">1:1<svg class="c"><use href="#caret"/></svg></span>
    <span><svg class="i" viewBox="0 0 20 20"><circle cx="10" cy="10" r="5.500" fill="none" stroke="#ddd" stroke-width="4.500"/><circle cx="10" cy="10" r="8.600" fill="none" stroke="#ddd" stroke-width="3" stroke-dasharray="3.600 3.150"/></svg></span>
    <span class="e"><svg class="c"><use href="#caret"/></svg></span>
    <span class="e"><svg class="i" viewBox="0 0 20 20"><path d="M10 0v20M0 10h20" stroke="#e6e6e6" stroke-width="2"/></svg></span>
    <span class="e"><svg class="i" viewBox="0 0 20 20" fill="none" stroke="#ddd"><path d="M1 1h7v7H1zM8 12l5 8H3z"/><circle cx="15" cy="9" r="4.500"/></svg></span>
    <span class="e"></span>
    <span><svg class="i" viewBox="0 0 20 20"><path d="M.5 3.500h19v13H.5z" fill="none" stroke="#ccc"/><path d="M14 5h4v4zM2 11v4h4zM17 6l-4 4M3 14l4-4" fill="#ddd" stroke="#ddd"/></svg></span>
    <span><svg class="i" viewBox="0 0 20 20"><path d="M0 2h20M0 10h20M0 18h20" stroke="#e6e6e6" stroke-width="2"/></svg></span>
  </div>
</footer>
</body>
</html>
```
FILE: styles.css
```css
* { box-sizing: border-box; }
body {
  margin: 0;
  width: 1920px;
  height: 1030px;
  overflow: hidden;
  background: #383838;
  color: #f0f0f0;
  font: 14px/20px "Noto Sans", "Open Sans", sans-serif;
  display: flex;
  flex-direction: column;
}
svg { display: block; flex: none; overflow: visible; }
.defs { position: absolute; }
b { font-weight: 400; }
.i { width: 20px; height: 20px; }
.c { width: 10px; height: 6px; color: #fff; }
.c.sm { width: 6px; height: 4px; }
.c.dim { color: #b0b0b0; }
.l { width: 8px; height: 8px; }

/* title and menu */
.header {
  display: grid;
  grid-template-columns: 50px 1fr;
  grid-template-rows: 29px 27px;
  height: 56px;
  flex: none;
  background: #5c5c5c;
}
.app {
  grid-row: 1 / 3;
  width: 50px;
  height: 50px;
  padding: 0;
  border: solid #111;
  border-width: 0 2px 2px 0;
  background: linear-gradient(#9b9b9b, #6d6d6d);
}
.title { display: flex; background: #fff; color: #111; height: 29px; }
.qat {
  width: 327px;
  flex: none;
  display: flex;
  align-items: center;
  padding-left: 10px;
  gap: 10px;
  border-right: 1px solid #555;
  background: linear-gradient(#9c9c9c, #6f6f6f);
}
.qat .c { margin: 0 -1px; }
.qat .c.dim { margin: 0 -5px 0 0; }
.caption { width: 780px; flex: none; display: flex; gap: 17px; padding: 5px 0 0 254px; font-size: 14.250px; white-space: nowrap; }
.info { width: 558px; flex: none; display: flex; align-items: center; background: linear-gradient(#9c9c9c, #6f6f6f); color: #fff; }
.info-arrow { width: 17px; height: 29px; background: #909090; display: flex; align-items: center; justify-content: center; }
.info-arrow::after { content: ""; border: 5px solid transparent; border-left-color: #fff; border-right: 0; }
.search {
  width: 225px;
  height: 28px;
  border: 1px solid #333;
  background: #6f6f6f;
  color: #bcbcbc;
  font: italic 13.650px/25px "Noto Sans", sans-serif;
  padding-left: 3px;
  margin-right: 4px;
  white-space: nowrap;
}
.info .i + .i { margin-left: 10px; }
.login { margin: 1px 5px 0 7px; width: 102px; font-size: 14.250px; white-space: nowrap; }
.cart { margin-left: 12px; }
.tri { margin-right: 7px; }
.bar { width: 1px; height: 18px; margin: 0 11px 0 12px; background: #a5a5a5; }
.help {
  width: 20px;
  height: 20px;
  border: 1.500px solid #333a4a;
  border-radius: 50%;
  background: #f4f4f8;
  color: #1c3fae;
  font: 700 15px/17px "Noto Sans", sans-serif;
  text-align: center;
  margin-right: 10px;
}
.win { display: flex; align-items: center; gap: 46px; margin-left: 51px; padding-bottom: 1px; }
.menu {
  display: grid;
  grid-template-columns: 63px 76px 53px 78px 80px 76px 101px 88px 128px 62px 84px 1fr auto;
  border-top: 1px solid #3a3a3a;
  border-bottom: 1px solid #2e2e2e;
  background: linear-gradient(#a2a2a2, #686868);
  padding: 3px 4px 0 15px;
  color: #fff;
  letter-spacing: .15px;
  white-space: nowrap;
}
.mdi { margin-top: 4px; }
.tabs {
  display: grid;
  grid-template-columns: 81px 57px 116px 56px 122px 145px 77px 103px 49px 110px 70px 176px 32px;
  height: 24px;
  flex: none;
  background: #535353;
  border-bottom: 1px solid #2d2d2d;
  padding: 3px 0 0 14px;
  color: #c6c6c6;
  letter-spacing: .2px;
  white-space: nowrap;
}
.tabs .on {
  width: 77px;
  height: 22px;
  margin: -1px 0 0 -11px;
  padding-left: 10px;
  background: linear-gradient(#727272, #5d5d5d);
  border: solid #2d2d2d;
  border-width: 1px 1px 0;
  color: #eee;
}
.mini { margin-top: 4px; }

/* ribbon */
.ribbon {
  display: flex;
  height: 124px;
  flex: none;
  background: linear-gradient(#4f4f4f, #373737);
  border-bottom: 1px solid #858585;
}
.panel { flex: none; display: flex; flex-direction: column; height: 122px; background: #5c5c5c; border-right: 1px solid #373737; border-left: 1px solid #676767; margin-bottom: 1px; }
.panel .body { height: 100px; display: flex; flex: none; }
.panel footer {
  position: relative;
  flex: 1;
  display: flex;
  align-items: center;
  justify-content: center;
  gap: 8px;
  padding-top: 2px;
  background: linear-gradient(#515151, #454545);
  letter-spacing: .15px;
  white-space: nowrap;
}
.panel footer .l { position: absolute; right: 5px; top: 8px; }
.big { display: flex; flex-direction: column; align-items: center; padding-top: 8px; text-align: center; white-space: nowrap; }
.big b { margin-top: 6px; }
.big .c { margin-top: 3px; }
.col { display: flex; flex-direction: column; gap: 11px; padding-top: 9px; }
.p-model { width: 190px; }
.b1 { width: 68px; }
.b2 { width: 83px; }
.p-model .col { margin-left: 8px; }
.p-model footer { padding-right: 1px; }
.p-mesh { width: 101px; }
.p-mesh .big { width: 66px; padding-top: 7px; }
.p-mesh .big b { margin-top: 5px; }
.p-mesh .col { margin-left: 4px; }
.p-mesh footer { padding-right: 16px; }
.p-solid { width: 179px; }
.p-draw { width: 117px; }
.p-edit { width: 181px; }
.p-section { width: 105px; }
.p-section .big { width: 100%; }
.p-section footer { justify-content: flex-start; padding-left: 5px; }
.p-ucs { width: 181px; }
.p-ucs footer { padding-right: 6px; }
.p-view { width: 202px; }
.p-select { width: 266px; }
.panel .icons { display: grid; grid-auto-rows: 31px; align-items: center; justify-items: end; padding-top: 3px; }
.p-solid .icons { grid-template-columns: 57px 35px 32px 16px; }
.p-draw .icons { grid-template-columns: 26px 30px 35px 16px; }
.p-edit .icons { grid-template-columns: 25px 34px 31px 35px 30px 16px; }
.p-ucs .icons { grid-template-columns: 26px 13px 36px 35px 30px 30px; }
.line .i { fill: none; stroke: #c4c4c4; stroke-width: 1; }
.line .d { fill: #7fc0ee; stroke: none; }
.line .b { stroke: #77b5e2; }
.combo {
  display: flex;
  align-items: center;
  width: 196px;
  height: 28px;
  border: 1px solid #303030;
  background: linear-gradient(#666, #4d4d4d);
  padding: 1px 4px 0 2px;
  font-size: 14.350px;
  white-space: nowrap;
}
.combo span { flex: 1; margin-left: 4px; }
.combo:nth-child(2) span { margin-left: 2px; }
.wcs { grid-column: 3 / 7; width: 125px; margin-right: -4px; padding: 0 2px 0 4px; }
.wcs span { margin-left: 2px; }
.p-view .body { flex-direction: column; padding: 6px 0 0 1px; gap: 3px; }
.vp { display: flex; align-items: center; gap: 7px; padding: 2px 0 0 4px; }
.pick { width: 51px; height: 90px; margin: 4px 0 0 1px; padding-top: 3px; background: linear-gradient(#7d99c8, #4e6898); border: 1px solid #27395e; }
.pick b { margin-top: 5px; }
.filter { width: 117px; }
.gizmo { width: 90px; }
.gizmo-caret { margin: 74px 0 0 -7px; }
.p-select footer { margin-right: 2px; }
.slim {
  flex: none;
  display: flex;
  flex-direction: column;
  align-items: center;
  width: 75px;
  height: 122px;
  margin-right: 1px;
  padding: 6px 2px 6px 0;
  background: linear-gradient(#6e6e6e, #4b4b4b);
  border: 1px solid #303030;
}
.slim b { margin: 4px 0 auto; }
.groups b { margin-top: 4px; }

/* file tabs */
.files { height: 31px; flex: none; display: flex; background: #363636; padding-left: 20px; }
.ft { position: relative; height: 28px; margin-top: 3px; padding-top: 2px; color: #a9a9a9; display: flex; align-items: center; }
.ft > svg:first-child { position: absolute; left: 0; top: 0; }
.ft span { position: relative; padding-left: 19px; letter-spacing: .1px; }
.start { width: 156px; }
.cur { width: 164px; color: #f2f2f2; }
.cur span { padding-left: 17px; flex: 1; }
.cur .x { position: relative; margin-right: 22px; }
.ft-add { margin: 9px 0 0 3px; }
.strip { height: 5px; flex: none; background: #5a5a5a; }

/* drawing area */
.view { position: relative; height: 755px; flex: none; background: #212830; overflow: hidden; }
.vlabel { font: 14px/16px "Noto Sans", sans-serif; letter-spacing: .11px; padding: 8px 0 0 2px; color: #e3e3e3; white-space: nowrap; }
.rook { position: absolute; left: 760px; top: 60px; }
.cross { position: absolute; left: 1266px; top: 305px; }
.ghost { position: absolute; left: 1320px; top: 364px; width: 244px; height: 24px; padding: 3px 0 0 34px; background: #2b343e; color: #1c232c; }
.cube { position: absolute; left: 1719px; top: 30px; }
.wcs-btn {
  position: absolute;
  left: 1792px;
  top: 181px;
  width: 55px;
  height: 21px;
  border-radius: 5px;
  border: 1px solid #777a82;
  background: #9296a0;
  color: #3f434b;
  font: 12.500px/18px "Liberation Sans", sans-serif;
  letter-spacing: .5px;
  display: flex;
  align-items: center;
  padding-left: 4px;
  gap: 6px;
}
.wcs-btn svg { color: #b9bcc4; }
.navbar { position: absolute; left: 1865px; top: 232px; }
.ucs { position: absolute; left: 0; top: 620px; }
.cmd {
  position: absolute;
  left: 383px;
  top: 721px;
  width: 1153px;
  height: 34px;
  display: flex;
  align-items: center;
  background: #bcbec0;
  border-radius: 3px;
  border-bottom: 2px solid #7b7b7b;
  color: #737373;
  font: italic 15px/20px "DejaVu Sans Mono", monospace;
}
.cmd-l { width: 70px; height: 34px; margin-right: 6px; background: linear-gradient(#686868, #3c3c3c); border-radius: 3px 0 0 0; margin-bottom: -2px; }
.cmd span { flex: 1; margin-left: 6px; padding-top: 3px; white-space: nowrap; }
.cmd i { border: 5px solid transparent; border-bottom-color: #222; border-top: 0; margin-right: 6px; }
.edge { position: absolute; right: 0; top: 0; width: 11px; height: 755px; background: linear-gradient(#b8cdee 0, #b8cdee 50px, #dce6f7 89px, #b8cdee 90px) no-repeat 0 0 / 8px 100%, linear-gradient(90deg, #5ad2de 9px, #444 9px); }

/* layout tabs and status bar */
.bottom { height: 35px; flex: none; display: flex; background: #383838; border-top: 1px solid #555; padding-left: 13px; }
.lt { position: relative; height: 23px; text-align: center; color: #b6b6b6; }
.lt svg { position: absolute; left: 0; top: 0; }
.lt span { position: relative; display: block; padding-top: 1px; }
.lt.on { width: 88px; color: #fff; font-weight: 700; font-size: 14.200px; }
.lt.a { width: 68px; }
.lt.b { width: 71px; }
.lt-add { margin: 1px auto 0 3px; }
.status {
  display: grid;
  grid-template-columns: 72px 31px 30px 21px 33px 30px 30px 18px 32px 18px 31px 30px 20px 34px 31px 29px 30px 43px 33px 18px 32px 33px 7px 32px 31px;
  width: 750px;
  height: 33px;
  background: #4f4f4f;
  border: solid #777;
  border-width: 0 0 1px 1px;
}
.status > span { display: flex; align-items: center; justify-content: center; white-space: nowrap; }
.status .e { border-right: 2px solid #787878; }
.status .model { font-size: 14.800px; color: #fff; }
.status .act { background: #5f8fc7; margin: 1px; }
.status .c { width: 8px; height: 5px; }
.status .scale { gap: 5px; font-size: 14px; color: #fff; }
```
